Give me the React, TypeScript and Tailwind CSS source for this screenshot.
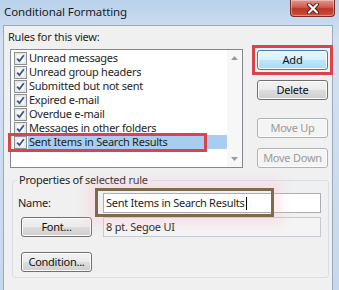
import React from 'react';

const rules = [
  'Unread messages',
  'Unread group headers',
  'Submitted but not sent',
  'Expired e-mail',
  'Overdue e-mail',
  'Messages in other folders',
  'Sent Items in Search Results',
];

function Check() {
  return (
    <svg width="13" height="13" viewBox="0 0 13 13" className="shrink-0">
      <rect x="0.5" y="0.5" width="12" height="12" fill="#f4f4f4" stroke="#8e8f8f" />
      <rect x="2" y="2" width="9" height="9" fill="#fdfdfd" stroke="#d2d5da" strokeWidth="0.8" />
      <path d="M3.2 6.6 L5.4 9.2 L9.8 3.2" fill="none" stroke="#3a5489" strokeWidth="1.8" strokeLinejoin="round" />
    </svg>
  );
}

type BtnKind = 'normal' | 'default' | 'disabled';

function Btn({ label, kind = 'normal', className = '' }: { label: string; kind?: BtnKind; className?: string }) {
  const look =
    kind === 'default'
      ? 'border-[#3c7fb1] bg-[linear-gradient(#eaf6fd,#d9f0fc_50%,#bee6fd_50%,#a7d9f5)] text-[#111]'
      : kind === 'disabled'
        ? 'border-[#adb2b5] bg-[#f4f4f4] text-[#9a9a9a]'
        : 'border-[#707070] bg-[linear-gradient(#f2f2f2,#ebebeb_50%,#dddddd_50%,#cfcfcf)] text-[#111]';
  return (
    <div
      className={`flex h-[20px] w-[71px] items-center justify-center rounded-[3px] border shadow-[inset_0_0_0_1px_#fcfcfc] ${look} ${className}`}
    >
      {label}
    </div>
  );
}

export default function App() {
  return (
    <div className="relative h-[290px] w-[339px] overflow-hidden bg-[linear-gradient(#b9d1ea,#d2e2f3_40px,#c8d8ec)] font-['Noto_Sans',sans-serif] text-[11px] leading-[14px] tracking-[-0.25px] text-[#1e1e1e]">
      {/* Title bar */}
      <div className="flex h-[25px] items-start justify-between">
        <div className="pl-[4px] pt-[4px] text-[11.5px] leading-[16px] tracking-[-0.1px] text-[#1a1a1a]">Conditional Formatting</div>
        <div className="mr-[4px] flex h-[17px] w-[45px] items-center justify-center rounded-b-[4px] border border-t-0 border-[#7c2a24] bg-[linear-gradient(#e2978c,#cf5b4e_45%,#bb3426_55%,#c9543c)] shadow-[inset_0_0_0_1px_rgba(255,255,255,0.35)]">
          <svg width="14" height="11" viewBox="0 0 14 11">
            <path d="M3 1.5 L11 9.5 M11 1.5 L3 9.5" stroke="#5a1a14" strokeWidth="4" strokeLinecap="round" />
            <path d="M3 1.5 L11 9.5 M11 1.5 L3 9.5" stroke="#ffffff" strokeWidth="2.2" strokeLinecap="round" />
          </svg>
        </div>
      </div>

      {/* Client area */}
      <div className="ml-[3px] mr-[6px] h-[280px] border border-[#97a9be] bg-[#f0f0f0]">
        <div className="pl-[4px] pt-[4px]">Rules for this view:</div>

        <div className="mt-[5px] flex items-start">
          {/* Rules list */}
          <div className="ml-[6px] flex h-[119px] w-[233px] border border-[#828790] bg-white">
            <div className="flex-1 pt-[1px]">
              {rules.map((r, i) => (
                <div key={r} className="flex h-[14px] items-center">
                  <div className="ml-[3px] mr-[1px]">
                    <Check />
                  </div>
                  <div className={`flex h-[14px] flex-1 items-center pl-[1px] ${i === rules.length - 1 ? 'bg-[#a9cdf0]' : ''}`}>
                    {r}
                  </div>
                </div>
              ))}
            </div>
            <div className="flex w-[15px] flex-col items-center justify-between bg-[#f7f7f7] py-[6px]">
              <svg width="7" height="4" viewBox="0 0 7 4">
                <path d="M0 4 L3.5 0 L7 4 Z" fill="#9a9a9a" />
              </svg>
              <svg width="7" height="4" viewBox="0 0 7 4">
                <path d="M0 0 L3.5 4 L7 0 Z" fill="#9a9a9a" />
              </svg>
            </div>
          </div>

          {/* Buttons */}
          <div className="ml-[14px] mt-[1px] flex flex-col">
            <Btn label="Add" kind="default" />
            <Btn label="Delete" className="mt-[10px]" />
            <Btn label="Move Up" kind="disabled" className="mt-[18px]" />
            <Btn label="Move Down" kind="disabled" className="mt-[10px]" />
          </div>
        </div>

        {/* Properties group */}
        <fieldset className="ml-[8px] mr-[3px] mt-[5px] rounded-[3px] border border-[#d5dfe5] pb-[5px] pt-[6px]">
          <legend className="ml-[4px] px-[2px]">Properties of selected rule</legend>
          <div className="flex items-center">
            <div className="w-[90px] pl-[5px]">Name:</div>
            <div className="flex h-[20px] w-[218px] items-center border border-[#abadb3] bg-white pl-[2px]">
              Sent Items in Search Results
              <span className="ml-[1px] inline-block h-[13px] w-[1px] bg-black" />
            </div>
          </div>
          <div className="mt-[4px] flex items-center">
            <Btn label="Font..." className="ml-[8px]" />
            <div className="ml-[11px] flex h-[20px] w-[218px] items-center border border-[#c6c9cf] bg-[#f4f4f4] pl-[2px]">
              8 pt. Segoe UI
            </div>
          </div>
          <Btn label="Condition..." className="ml-[8px] mt-[15px]" />
        </fieldset>
      </div>

      {/* Annotation boxes */}
      <div className="absolute left-[252px] top-[45px] h-[30px] w-[81px] border-[3px] border-[#d8434c]" />
      <div className="absolute left-[8px] top-[133px] h-[19px] w-[199px] border-[3px] border-[#d8434c]" />
      <div className="absolute left-[95px] top-[188px] h-[29px] w-[179px] border-[3px] border-[#7d6b4d] shadow-[0_0_10px_8px_rgba(255,190,205,0.3)]" />
    </div>
  );
}
